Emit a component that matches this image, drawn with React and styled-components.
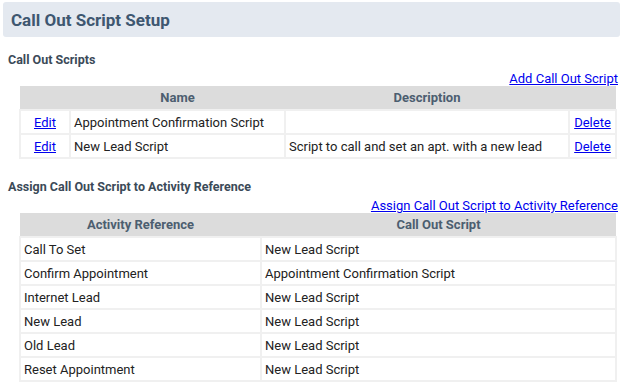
import React from "react";
import styled, { createGlobalStyle } from "styled-components";

const GlobalStyle = createGlobalStyle`
  body {
    margin: 0;
    background: #ffffff;
    font-family: Roboto, "Liberation Sans", sans-serif;
    font-size: 13px;
    color: #222222;
  }
`;

// scripts and their activity assignments
const scripts = [
  { name: "Appointment Confirmation Script", description: "" },
  { name: "New Lead Script", description: "Script to call and set an apt. with a new lead" },
];

const assignments = [
  { activity: "Call To Set", script: "New Lead Script" },
  { activity: "Confirm Appointment", script: "Appointment Confirmation Script" },
  { activity: "Internet Lead", script: "New Lead Script" },
  { activity: "New Lead", script: "New Lead Script" },
  { activity: "Old Lead", script: "New Lead Script" },
  { activity: "Reset Appointment", script: "New Lead Script" },
];

const App = () => {
  return (
    <Page>
      <GlobalStyle />
      <TitleBar>Call Out Script Setup</TitleBar>

      <Section>
        <SectionTitle>Call Out Scripts</SectionTitle>
        <LinkRow>
          <Link href="#">Add Call Out Script</Link>
        </LinkRow>
        <Table>
          <colgroup>
            <col style={{ width: 50 }} />
            <col style={{ width: 215 }} />
            <col style={{ width: 284 }} />
            <col />
          </colgroup>
          <thead>
            <tr>
              <Th></Th>
              <Th>Name</Th>
              <Th>Description</Th>
              <Th></Th>
            </tr>
          </thead>
          <tbody>
            {scripts.map((s) => (
              <tr key={s.name}>
                <Td $center>
                  <Link href="#">Edit</Link>
                </Td>
                <Td>{s.name}</Td>
                <Td>{s.description}</Td>
                <Td $center>
                  <Link href="#">Delete</Link>
                </Td>
              </tr>
            ))}
          </tbody>
        </Table>
      </Section>

      <Section $gap>
        <SectionTitle>Assign Call Out Script to Activity Reference</SectionTitle>
        <LinkRow>
          <Link href="#">Assign Call Out Script to Activity Reference</Link>
        </LinkRow>
        <Table>
          <colgroup>
            <col style={{ width: 241 }} />
            <col />
          </colgroup>
          <thead>
            <tr>
              <Th>Activity Reference</Th>
              <Th>Call Out Script</Th>
            </tr>
          </thead>
          <tbody>
            {assignments.map((a) => (
              <tr key={a.activity}>
                <Td>{a.activity}</Td>
                <Td>{a.script}</Td>
              </tr>
            ))}
          </tbody>
        </Table>
      </Section>
    </Page>
  );
};

const Page = styled.div`
  padding: 2px 3px 0 3px;
  width: 617px;
`;

const TitleBar = styled.div`
  height: 35px;
  display: flex;
  align-items: center;
  padding-left: 8px;
  background: #e4e9f0;
  border-radius: 3px;
  font-size: 17px;
  font-weight: bold;
  color: #3e5770;
`;

const Section = styled.div`
  display: flex;
  flex-direction: column;
  margin-top: ${(props) => (props.$gap ? "20px" : "15px")};
`;

const SectionTitle = styled.div`
  padding-left: 5px;
  font-size: 12.5px;
  font-weight: bold;
  color: #3b4a58;
  line-height: 16px;
`;

const LinkRow = styled.div`
  display: flex;
  justify-content: flex-end;
  margin-top: 4px;
  padding-right: 2px;
  line-height: 14px;
`;

const Link = styled.a`
  color: #0000ee;
  text-decoration: underline;
  font-size: 13px;
`;

const Table = styled.table`
  margin-left: 16px;
  width: 598px;
  table-layout: fixed;
  border-collapse: collapse;
  background: #ffffff;
`;

const Th = styled.th`
  height: 23px;
  padding: 0;
  background: #dcdcdc;
  color: #4c5e70;
  font-weight: bold;
  font-size: 13px;
  text-align: center;
`;

const Td = styled.td`
  height: 22px;
  padding: 0 3px;
  border: 2px solid #f0f0f0;
  text-align: ${(props) => (props.$center ? "center" : "left")};
  font-size: 13px;
  color: #222222;
  white-space: nowrap;
`;

export default App;
